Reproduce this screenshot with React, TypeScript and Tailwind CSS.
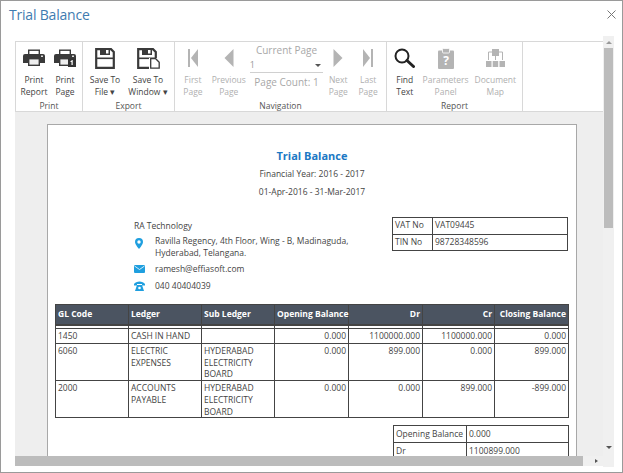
import React from 'react';

const GRAY = '#b4b4b4';
const DARK = '#3a3a3a';

const PrinterIcon = ({ badge }: { badge?: boolean }) => (
  <svg width="22" height="18" viewBox="0 0 22 18">
    <rect x="5.700" y="1.200" width="10.600" height="5" fill="#fff" stroke={DARK} strokeWidth="1.400" />
    <path d="M2 5h18a2 2 0 0 1 2 2v7h-22V7a2 2 0 0 1 2-2z" fill={DARK} />
    <rect x="18" y="6.500" width="2" height="1.500" fill="#ddd" />
    <rect x="5.700" y="9.700" width="10.600" height="6.600" fill="#eee" stroke={DARK} strokeWidth="1.400" />
    {badge && (
      <g>
        <rect x="14" y="9.500" width="8" height="8.500" fill="#333" />
        <path d="M17.500 11h1.200v5h-1.200zM16.500 12h1v1h-1z" fill="#fff" />
      </g>
    )}
  </svg>
);

const SaveIcon = ({ doc }: { doc?: boolean }) => (
  <svg width={doc ? 23 : 20} height="21" viewBox={doc ? '0 0 23 21' : '0 0 20 21'}>
    <path d="M1.200 1.200h14.800l2.800 2.800v15.800h-17.600z" fill="none" stroke={DARK} strokeWidth="2.200" />
    <path d="M5 1h10v6H5z" fill={DARK} />
    <rect x="11" y="2" width="2.500" height="3.500" fill="#fff" />
    <rect x="1" y="9.500" width="18" height="1.600" fill={DARK} />
    {doc && (
      <g>
        <rect x="12" y="10" width="11" height="11" fill="#fff" />
        <path d="M13.700 10.700h5l3.500 3.500v6h-8.500z" fill="#fff" stroke={DARK} strokeWidth="1.300" />
      </g>
    )}
  </svg>
);

const NavIcon = ({ dir, bar }: { dir: 'left' | 'right'; bar?: boolean }) => (
  <svg width="10" height="18" viewBox="0 0 10 18">
    {dir === 'left' ? (
      <g fill={GRAY}>
        <path d={bar ? 'M10 0v18L3 9z' : 'M9.500 0v18L0.500 9z'} />
        {bar && <rect x="0" y="0" width="2" height="18" />}
      </g>
    ) : (
      <g fill={GRAY}>
        <path d={bar ? 'M0 0v18l7-9z' : 'M0.500 0v18l9-9z'} />
        {bar && <rect x="8" y="0" width="2" height="18" />}
      </g>
    )}
  </svg>
);

const FindIcon = () => (
  <svg width="21" height="20" viewBox="0 0 21 20">
    <circle cx="8" cy="8" r="6.500" fill="none" stroke="#222" strokeWidth="2" />
    <path d="M13 12.500l6.500 6" stroke="#222" strokeWidth="3" strokeLinecap="round" />
  </svg>
);

const ParamsIcon = () => (
  <svg width="16" height="21" viewBox="0 0 16 21">
    <rect x="0" y="2.500" width="16" height="18.500" rx="1" fill={GRAY} />
    <rect x="4.500" y="0.500" width="7" height="4.500" rx="1" fill={GRAY} stroke="#fff" strokeWidth="0.800" />
    <text x="8" y="17" textAnchor="middle" fontSize="12" fontWeight="700" fill="#fff" fontFamily="'Open Sans', sans-serif">?</text>
  </svg>
);

const MapIcon = () => (
  <svg width="19" height="18" viewBox="0 0 19 18">
    <rect x="6" y="0" width="7" height="7" fill={GRAY} />
    <rect x="0" y="12" width="5.500" height="6" fill={GRAY} />
    <rect x="6.700" y="12" width="5.500" height="6" fill={GRAY} />
    <rect x="13.500" y="12" width="5.500" height="6" fill={GRAY} />
    <path d="M6 3H2.500v8M13 3h3.500v8M9.500 7v4" fill="none" stroke={GRAY} strokeWidth="1" />
  </svg>
);

const ToolButton = ({
  icon,
  lines,
  width,
  muted,
}: {
  icon: React.ReactNode;
  lines: string[];
  width: string;
  muted?: boolean;
}) => (
  <div className={`${width} flex flex-col items-center`}>
    <div className="h-[28px] flex items-center justify-center">{icon}</div>
    <div className={`mt-[2px] text-center text-[8.5px] leading-[12px] whitespace-nowrap ${muted ? 'text-[#b0b0b0]' : 'text-[#444]'}`}>
      {lines.map((l) => (
        <div key={l}>{l}</div>
      ))}
    </div>
  </div>
);

const Group = ({ label, width, children }: { label: string; width: string; children: React.ReactNode }) => (
  <div className={`${width} h-full flex flex-col border-r border-[#d8d8d8]`}>
    <div className="flex flex-1 pt-[2px]">{children}</div>
    <div className="h-[14px] text-center text-[8.5px] leading-[16px] text-[#555]">{label}</div>
  </div>
);

const rows = [
  { code: '1450', ledger: ['CASH IN HAND'], sub: [], open: '0.000', dr: '1100000.000', cr: '1100000.000', close: '0.000' },
  { code: '6060', ledger: ['ELECTRIC', 'EXPENSES'], sub: ['HYDERABAD', 'ELECTRICITY', 'BOARD'], open: '0.000', dr: '899.000', cr: '0.000', close: '899.000' },
  { code: '2000', ledger: ['ACCOUNTS', 'PAYABLE'], sub: ['HYDERABAD', 'ELECTRICITY', 'BOARD'], open: '0.000', dr: '0.000', cr: '899.000', close: '-899.000' },
];

const Td = ({ right, children }: { right?: boolean; children?: React.ReactNode }) => (
  <td className={`h-[15px] border border-[#444] px-[2px] align-top leading-[11.700px] pt-[1px] ${right ? 'text-right' : ''}`}>{children}</td>
);

const Th = ({ right, children }: { right?: boolean; children: React.ReactNode }) => (
  <th className={`border border-[#444] bg-[#4b5461] px-[2px] h-[20px] font-bold text-white whitespace-nowrap ${right ? 'text-right' : 'text-left'}`}>{children}</th>
);

export default function App() {
  return (
    <div
      className="w-[623px] h-[473px] overflow-hidden bg-white border border-[#9a9a9a] flex flex-col text-[#444]"
      style={{ fontFamily: "'Open Sans', 'Noto Sans', sans-serif" }}
    >
      {/* Title */}
      <div className="h-[35px] shrink-0 flex items-start justify-between pl-[8px] pr-[5px] pt-[3px]">
        <span className="text-[14px] leading-[22px] tracking-[-0.2px] text-[#3f7bb0]">Trial Balance</span>
        <svg width="9" height="9" viewBox="0 0 9 9" className="mt-[6px] mr-[1px]">
          <path d="M.5.5l8 8M8.500.5l-8 8" stroke="#777" strokeWidth="1" />
        </svg>
      </div>

      <div className="flex-1 flex pl-[14px] min-h-0">
        <div className="w-[588px] flex flex-col">
          <div className="h-[5px] shrink-0" />
          {/* Toolbar */}
          <div className="h-[71px] shrink-0 flex border-y border-[#d8d8d8] border-l pr-[2px]">
            <Group label="Print" width="w-[67px]">
              <ToolButton width="w-[36px]" icon={<PrinterIcon />} lines={['Print', 'Report']} />
              <ToolButton width="w-[26px]" icon={<PrinterIcon badge />} lines={['Print', 'Page']} />
            </Group>
            <Group label="Export" width="w-[92px]">
              <ToolButton width="w-[44px]" icon={<SaveIcon />} lines={['Save To', 'File ▾']} />
              <ToolButton width="w-[42px]" icon={<SaveIcon doc />} lines={['Save To', 'Window ▾']} />
            </Group>
            <Group label="Navigation" width="w-[212px]">
              <ToolButton width="w-[36px]" muted icon={<NavIcon dir="left" bar />} lines={['First', 'Page']} />
              <ToolButton width="w-[36px]" muted icon={<NavIcon dir="left" />} lines={['Previous', 'Page']} />
              <div className="w-[80px] px-[3px] text-[#a8a8a8]">
                <div className="text-center text-[10px] leading-[13px] whitespace-nowrap">Current Page</div>
                <div className="mt-[1px] h-[15px] flex items-center justify-between border-b border-[#d0d0d0] text-[9px] text-[#999]">
                  <span>1</span>
                  <span className="border-x-[3px] border-t-[3px] border-x-transparent border-t-[#555] mr-[2px]" />
                </div>
                <div className="mt-[3px] text-center text-[10px] leading-[13px] whitespace-nowrap">Page Count: 1</div>
              </div>
              <ToolButton width="w-[24px]" muted icon={<NavIcon dir="right" />} lines={['Next', 'Page']} />
              <ToolButton width="w-[36px]" muted icon={<NavIcon dir="right" bar />} lines={['Last', 'Page']} />
            </Group>
            <Group label="Report" width="w-[136px]">
              <ToolButton width="w-[36px]" icon={<FindIcon />} lines={['Find', 'Text']} />
              <ToolButton width="w-[46px]" muted icon={<ParamsIcon />} lines={['Parameters', 'Panel']} />
              <ToolButton width="w-[54px]" muted icon={<MapIcon />} lines={['Document', 'Map']} />
            </Group>
          </div>

          {/* Report viewer */}
          <div className="h-[344px] shrink-0 overflow-hidden bg-[#eeeeee] pt-[12px] pl-[32px]">
            <div className="w-[530px] h-[400px] bg-white border border-[#a8a8a8] px-[7px] text-[8.5px]">
              <div className="pt-[23px] text-center text-[11px] leading-[15px] font-bold text-[#1b78c4]">Trial Balance</div>
              <div className="mt-[3px] text-center leading-[15px]">Financial Year: 2016 - 2017</div>
              <div className="mt-[3px] text-center leading-[15px]">01-Apr-2016 - 31-Mar-2017</div>

              <div className="mt-[18px] flex">
                <div className="w-[337px] pl-[79px] pt-[2px]">
                  <div className="leading-[13px]">RA Technology</div>
                  <div className="mt-[3px] flex">
                    <svg width="8" height="11" viewBox="0 0 8 11" className="mt-[3px] ml-[1px] mr-[12px] shrink-0">
                      <path d="M4 0a4 4 0 0 1 4 4c0 2.500-4 7-4 7S0 6.500 0 4a4 4 0 0 1 4-4zm0 2.300a1.700 1.700 0 1 0 0 3.400 1.700 1.700 0 0 0 0-3.400z" fill="#1f9fdf" />
                    </svg>
                    <div className="leading-[12px]">
                      Ravilla Regency, 4th Floor, Wing - B, Madinaguda,
                      <br />
                      Hyderabad, Telangana.
                    </div>
                  </div>
                  <div className="mt-[4px] flex items-center">
                    <svg width="11" height="8" viewBox="0 0 11 8" className="mr-[10px] shrink-0">
                      <rect width="11" height="8" rx="1" fill="#1f9fdf" />
                      <path d="M.5 1l5 3.500 5-3.500" fill="none" stroke="#fff" strokeWidth=".8" />
                    </svg>
                    <span className="leading-[12px]">ramesh@effiasoft.com</span>
                  </div>
                  <div className="mt-[5px] flex items-center">
                    <svg width="11" height="10" viewBox="0 0 11 10" className="mr-[10px] shrink-0">
                      <path d="M0 3c2-3.500 9-3.500 11 0v1.500H8V3H3v1.500H0z" fill="#1f9fdf" />
                      <path d="M3 4h5l2 6H1z" fill="#1f9fdf" />
                      <circle cx="5.500" cy="7" r="1.300" fill="#fff" />
                    </svg>
                    <span className="leading-[12px]">040 40404039</span>
                  </div>
                </div>
                <table className="w-[176px] h-[34px] table-fixed border-collapse border border-[#444]">
                  <tbody>
                    <tr>
                      <td className="w-[40px] border border-[#444] px-[2px]">VAT No</td>
                      <td className="border border-[#444] px-[2px]">VAT09445</td>
                    </tr>
                    <tr>
                      <td className="border border-[#444] px-[2px]">TIN No</td>
                      <td className="border border-[#444] px-[2px]">98728348596</td>
                    </tr>
                  </tbody>
                </table>
              </div>

              <table className="mt-[12px] w-[513px] table-fixed border-collapse">
                <colgroup>
                  <col className="w-[73px]" />
                  <col className="w-[73px]" />
                  <col className="w-[73px]" />
                  <col className="w-[74px]" />
                  <col className="w-[74px]" />
                  <col className="w-[72px]" />
                  <col className="w-[74px]" />
                </colgroup>
                <thead>
                  <tr>
                    <Th>GL Code</Th>
                    <Th>Ledger</Th>
                    <Th>Sub Ledger</Th>
                    <Th right>Opening Balance</Th>
                    <Th right>Dr</Th>
                    <Th right>Cr</Th>
                    <Th right>Closing Balance</Th>
                  </tr>
                  <tr>
                    {[0, 1, 2, 3, 4, 5, 6].map((i) => (
                      <th key={i} className="h-[4px] border-x border-t-2 border-[#444] p-0" />
                    ))}
                  </tr>
                </thead>
                <tbody>
                  {rows.map((r) => (
                    <tr key={r.code}>
                      <Td>{r.code}</Td>
                      <Td>
                        {r.ledger.map((l) => (
                          <div key={l}>{l}</div>
                        ))}
                      </Td>
                      <Td>
                        {r.sub.map((l) => (
                          <div key={l}>{l}</div>
                        ))}
                      </Td>
                      <Td right>{r.open}</Td>
                      <Td right>{r.dr}</Td>
                      <Td right>{r.cr}</Td>
                      <Td right>{r.close}</Td>
                    </tr>
                  ))}
                </tbody>
              </table>

              <div className="mt-[7px] flex justify-end">
                <table className="w-[176px] table-fixed border-collapse">
                  <tbody>
                    <tr>
                      <td className="w-[73px] h-[17px] border border-[#444] px-[2px]">Opening Balance</td>
                      <td className="border border-[#444] px-[2px]">0.000</td>
                    </tr>
                    <tr>
                      <td className="h-[17px] border border-[#444] px-[2px]">Dr</td>
                      <td className="border border-[#444] px-[2px]">1100899.000</td>
                    </tr>
                  </tbody>
                </table>
              </div>
            </div>
          </div>

          {/* Horizontal scrollbar */}
          <div className="h-[10px] shrink-0 flex items-center bg-[#f0f0f0] pr-[3px]">
            <div className="w-[568px] h-full bg-[#bcbcbc]" />
            <div className="ml-auto mr-[2px] border-y-[2.5px] border-l-[3px] border-y-transparent border-l-[#555]" />
          </div>
        </div>

        {/* Vertical scrollbar */}
        <div className="w-[11px] h-[431px] shrink-0 flex flex-col items-center bg-[#f0f0f0]">
          <div className="h-[12px] flex items-center">
            <div className="border-x-[3px] border-b-[3px] border-x-transparent border-b-[#999]" />
          </div>
          <div className="w-[9px] h-[180px] bg-[#bcbcbc]" />
          <div className="mt-[218px] border-x-[3px] border-t-[3px] border-x-transparent border-t-[#555]" />
        </div>
      </div>
    </div>
  );
}
